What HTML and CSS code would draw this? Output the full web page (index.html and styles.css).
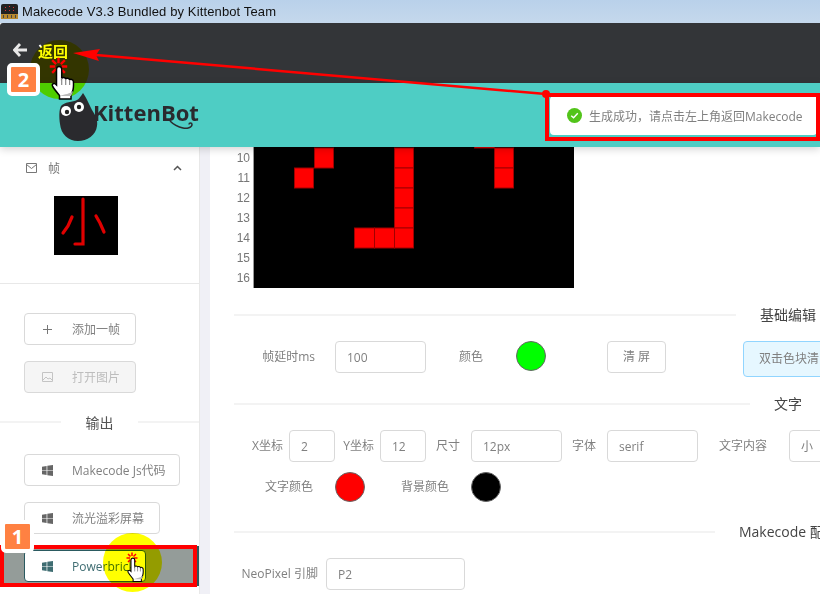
FILE: index.html
```html
<!DOCTYPE html>
<html lang="en">
<head>
    <meta charset="UTF-8">
    <title>Makecode V3.3</title>
    <link rel="stylesheet" href="styles.css">
</head>
<body>
<svg class="defs" width="0" height="0">
    <symbol id="win" viewBox="0 0 12 12">
        <path d="M0 1.8 5 1V5.6H0zM5.8 .9 12 0V5.6H5.8zM0 6.4H5V11L0 10.2zM5.8 6.4H12V12L5.8 11.1z"/>
    </symbol>
    <symbol id="hand" viewBox="0 0 25 36">
        <path d="M8 1.5c1.6 0 2.7 1.1 2.7 2.8v9c.8-1.2 3.4-1.2 4 .6.8-1.2 3.4-1 3.9.9.9-1 3.6-.6 3.8 1.700.2 3 .1 6-.3 8-.4 2-1.300 3.500-2.100 5v4.500H8.500v-3.500C6 27.500 3.500 24.500 1.700 21.500c-1.200-2.200.8-4 2.800-2.500l1 1V4.300C5.500 2.600 6.400 1.500 8 1.500z" fill="#fff" stroke="#000" stroke-width="1.500"/>
        <path d="M10.700 13v7M14.700 14v6M18.600 15v5" stroke="#888" stroke-width="1.200" fill="none"/>
        <path d="M9 31h11c.8-1.500 1.700-3 2-5-3 3-8 3-13 5z" fill="#bbb"/>
    </symbol>
    <symbol id="burst" viewBox="0 0 24 24">
        <path d="M12 1v7M12 16v7M1 12h7M16 12h7M4 4l5 5M20 4l-5 5M4 20l5-5M20 20l-5-5" stroke="#f00" stroke-width="3" fill="none"/>
    </symbol>
</svg>

<div class="app">
    <div class="titlebar">
        <svg class="mb-icon" width="17" height="15" viewBox="0 0 17 15">
            <rect width="17" height="15" rx="2" fill="#222"/>
            <rect y="10" width="17" height="5" fill="#b8892e"/>
            <path d="M4 3h1v1H4zM8 2h1v1H8zM12 3h1v1h-1zM4 6h1v1H4zM8 6h1v1H8zM12 6h1v1h-1z" fill="#d33"/>
            <path d="M2 11h1v3H2zM6 11h1v3H6zM10 11h1v3h-1zM14 11h1v3h-1z" fill="#444"/>
        </svg>
        <span>Makecode V3.3 Bundled by Kittenbot Team</span>
    </div>

    <div class="topbar">
        <svg class="back" width="14" height="14" viewBox="0 0 14 14">
            <path d="M7 1 1.500 7 7 13M2 7h12" fill="none" stroke="#e8e8e8" stroke-width="2.800"/>
        </svg>
        <b class="back-text">返回</b>
    </div>

    <div class="brandbar">
        <div class="logo">
            <svg class="cat" width="40" height="50" viewBox="0 0 40 50">
                <path d="M2 14C5 10 14 10 18 8 20 7 22 4 24 1 27 5 31 14 33 18 37 24 39 29 38 34 37 43 28 49 19 49 9 49 2 42 1 32 0 25 0 18 2 14z" fill="#2a2a2e"/>
                <circle cx="7" cy="19" r="5" fill="#fff"/>
                <circle cx="20" cy="15" r="5" fill="#fff"/>
                <circle cx="8" cy="20" r="2.200" fill="#222"/>
                <circle cx="20" cy="15" r="2.200" fill="#222"/>
            </svg>
            <span class="logo-text">KittenBot</span>
            <svg class="tail" width="26" height="12" viewBox="0 0 26 12">
                <path d="M1 1c4 4 8 6 13 7 4 .8 9-.5 9-3.500 0-2-3-2-3 0" fill="none" stroke="#2a2a2e" stroke-width="1.500"/>
            </svg>
        </div>
        <div class="toast">
            <svg width="15" height="15" viewBox="0 0 16 16">
                <circle cx="8" cy="8" r="8" fill="#52c41a"/>
                <path d="M4.500 8.200 7 10.500l4.500-5" fill="none" stroke="#fff" stroke-width="1.500"/>
            </svg>
            <span>生成成功，请点击左上角返回Makecode</span>
        </div>
    </div>

    <div class="work">
        <aside class="side">
            <div class="menu-head">
                <svg class="mail" width="11" height="10" viewBox="0 0 11 10">
                    <path d="M.5.5h10v9H.500zM.5 1.500 5.500 5.500l5-4" fill="none" stroke="#777"/>
                </svg>
                <span>帧</span>
                <svg class="chev" width="9" height="6" viewBox="0 0 9 6">
                    <path d="M1 5 4.500 1.500 8 5" fill="none" stroke="#555" stroke-width="1.500"/>
                </svg>
            </div>
            <svg class="thumb" width="64" height="59" viewBox="0 0 64 59">
                <rect width="64" height="59" fill="#000"/>
                <g class="thumb-strokes" fill="none" stroke="#e00000" stroke-width="3.200" stroke-linecap="round">
                    <path d="M29 3V48H21"/>
                    <path d="M18 21 14 30 9 37"/>
                    <path d="M42 20 46 27 50 36"/>
                </g>
            </svg>
            <div class="side-line"></div>
            <div class="item first"><div class="btn w112">
                <svg class="plus" width="11" height="11" viewBox="0 0 11 11"><path d="M5.500 1v9M1 5.500h9" stroke="#777" fill="none"/></svg>
                <span>添加一帧</span>
            </div></div>
            <div class="item"><div class="btn w112 off">
                <svg width="11" height="10" viewBox="0 0 11 10"><path d="M.5.500h10v9H.500zM1 8l3-3 2 2 2-1 2 2" fill="none" stroke="#c4c4c4"/></svg>
                <span>打开图片</span>
            </div></div>
            <div class="side-title"><i></i><span>输出</span><i></i></div>
            <div class="item"><div class="btn w156"><svg class="win"><use href="#win"/></svg><span>Makecode Js代码</span></div></div>
            <div class="item"><div class="btn w136"><svg class="win"><use href="#win"/></svg><span>流光溢彩屏幕</span></div></div>
            <div class="item on"><div class="btn w122"><svg class="win"><use href="#win"/></svg><span>Powerbrick</span></div></div>
        </aside>
        <div class="gutter"></div>

        <main class="content">
            <div class="matrix">
                <div class="rows">
                    <span class="row-first">10</span><span>11</span><span>12</span><span>13</span><span>14</span><span>15</span><span>16</span>
                </div>
                <svg class="leds" width="320" height="141" viewBox="0 0 320 141">
                    <rect width="320" height="141" fill="#000"/>
                    <g fill="#f00" stroke="#a00000" stroke-width="1">
                        <rect x="220.500" y="-19" width="20" height="20"/>
                        <rect x="60.500" y="1" width="19" height="20"/>
                        <rect x="140.500" y="1" width="19" height="20"/>
                        <rect x="240.500" y="1" width="19" height="20"/>
                        <rect x="40.500" y="21" width="19" height="20"/>
                        <rect x="140.500" y="21" width="19" height="20"/>
                        <rect x="240.500" y="21" width="19" height="20"/>
                        <rect x="140.500" y="41" width="19" height="20"/>
                        <rect x="140.500" y="61" width="19" height="20"/>
                        <rect x="100.500" y="81" width="20" height="20"/>
                        <rect x="120.500" y="81" width="20" height="20"/>
                        <rect x="140.500" y="81" width="19" height="20"/>
                    </g>
                </svg>
            </div>

            <div class="rule"><i class="w502"></i><span>基础编辑</span></div>
            <div class="row">
                <label class="l-delay">帧延时ms</label>
                <input class="w91" value="100">
                <label class="l-color">颜色</label>
                <span class="dot green"></span>
                <div class="plain">清 屏</div>
                <div class="alert">双击色块清</div>
            </div>

            <div class="rule rule-text"><i class="w516"></i><span>文字</span></div>
            <div class="row">
                <label class="l-x">X坐标</label>
                <input class="w46" value="2">
                <label class="l-y">Y坐标</label>
                <input class="w46" value="12">
                <label class="l-size">尺寸</label>
                <input class="w91" value="12px">
                <label class="l-size">字体</label>
                <input class="w91" value="serif">
                <label class="l-content">文字内容</label>
                <input class="w91" value="小">
            </div>
            <div class="row row-colors">
                <label class="l-textcolor">文字颜色</label>
                <span class="dot red"></span>
                <label class="l-bgcolor">背景颜色</label>
                <span class="dot black"></span>
            </div>

            <div class="rule rule-mk"><i class="w481"></i><span>Makecode 配</span></div>
            <div class="row">
                <label class="l-neo">NeoPixel 引脚</label>
                <input class="w139" value="P2">
            </div>
        </main>
    </div>

    <!-- 标注 -->
    <div class="mark-box box-toast"></div>
    <div class="mark-box box-item"></div>
    <svg class="arrow" width="820" height="594" viewBox="0 0 820 594">
        <path d="M96 55 546 94" stroke="#f00" stroke-width="2.500" fill="none"/>
        <path d="M73 53 100 49 96 55 99 61z" fill="#f00"/>
        <circle cx="546" cy="94" r="4" fill="#f00"/>
    </svg>
    <div class="spot spot-top"></div>
    <div class="spot spot-bottom"></div>
    <svg class="burst burst-top"><use href="#burst"/></svg>
    <svg class="hand hand-top"><use href="#hand"/></svg>
    <svg class="burst burst-bottom"><use href="#burst"/></svg>
    <svg class="hand hand-bottom"><use href="#hand"/></svg>
    <div class="badge badge-1">1</div>
    <div class="badge badge-2">2</div>
</div>
</body>
</html>
```

FILE: styles.css
```css
* {
    margin: 0;
    padding: 0;
    box-sizing: border-box;
}
body {
    background-color: #fff;
    overflow: hidden;
    font: 12px "Open Sans", "Noto Sans CJK SC", sans-serif;
    color: #808080;
}
i {
    display: block;
}
.defs {
    position: absolute;
}
.app {
    position: relative;
    width: 820px;
    height: 594px;
    overflow: hidden;
    background-color: #fff;
}

/* 顶部 */
.titlebar {
    display: flex;
    align-items: center;
    gap: 4px;
    height: 23px;
    padding-left: 1px;
    background: linear-gradient(#b9d1ea, #c5d8ec);
    font: 13px "Liberation Sans", sans-serif;
    letter-spacing: .13px;
    color: #111;
}
.topbar {
    display: flex;
    align-items: center;
    gap: 11px;
    height: 60px;
    padding: 0 0 6px 13px;
    background-color: #333538;
    border-top-left-radius: 3px;
}
.back-text {
    color: #fff;
    font: bold 15px "Noto Sans CJK SC", sans-serif;
}
.brandbar {
    position: relative;
    z-index: 2;
    display: flex;
    align-items: center;
    justify-content: space-between;
    height: 64px;
    padding: 0 3px 0 59px;
    background-color: #4ecdc4;
    box-shadow: 0 2px 8px rgba(0, 0, 0, .18);
}
.logo {
    position: relative;
    display: flex;
    align-items: center;
    height: 64px;
}
.cat {
    margin-top: 4px;
    margin-right: -6px;
}
.logo-text {
    margin-top: -6px;
    font: bold 22px "Open Sans", sans-serif;
    color: #2a2a2e;
}
.tail {
    position: absolute;
    left: 110px;
    top: 37px;
}
.toast {
    display: flex;
    align-items: center;
    gap: 7px;
    width: 267px;
    height: 39px;
    padding-left: 17px;
    margin-top: 1px;
    background-color: #fff;
    border-radius: 4px;
}

/* 主体 */
.work {
    display: flex;
    height: 447px;
}
.side {
    flex: none;
    width: 200px;
    border-right: 1px solid #e8e8e8;
}
.gutter {
    flex: none;
    width: 10px;
    background-color: #f0f0f6;
}
.menu-head {
    display: flex;
    align-items: center;
    gap: 11px;
    height: 41px;
    padding: 0 17px 0 26px;
    color: #777;
}
.chev {
    margin-left: auto;
}
.thumb {
    display: block;
    margin: 8px 0 0 54px;
}
.thumb-strokes {
    filter: blur(.5px);
}
.side-line {
    height: 1px;
    margin-top: 28px;
    background-color: #e8e8e8;
}
.item {
    height: 40px;
    padding: 4px 0 4px 24px;
    margin-bottom: 8px;
}
.item.first {
    margin-top: 25px;
}
.item.on {
    margin-bottom: 0;
    background-color: #949c99;
    border-right: 3px solid #2a5a60;
}
.btn {
    display: flex;
    align-items: center;
    gap: 19px;
    height: 32px;
    padding-left: 17px;
    background-color: #fff;
    border: 1px solid #d9d9d9;
    border-radius: 4px;
    white-space: nowrap;
}
.w112 { width: 112px; }
.w156 { width: 156px; }
.w136 { width: 136px; }
.w122 { width: 122px; }
.btn svg {
    flex: none;
}
.btn.off {
    background-color: #f5f5f5;
    color: #bdbdbd;
}
.item.on .btn {
    border-color: #2a5a60;
    color: #3f6d72;
}
.win {
    width: 11px;
    height: 11px;
    fill: #666;
}
.item.on .win {
    fill: #3f6d72;
}
.side-title {
    display: flex;
    align-items: center;
    height: 20px;
    margin: 15px 0 18px;
    color: #555;
    font-size: 14px;
}
.side-title i {
    flex: 1;
    height: 2px;
    background-color: #f3f3f3;
}
.side-title span {
    width: 77px;
    text-align: center;
}

.content {
    flex: 1;
    min-width: 0;
    padding-left: 24px;
    overflow: hidden;
}
.matrix {
    display: flex;
    height: 141px;
}
.rows {
    display: flex;
    flex-direction: column;
    width: 16px;
    margin-right: 4px;
    font: 12px/20px "Liberation Sans", sans-serif;
    color: #777;
    text-align: right;
}
.row-first {
    height: 21px;
    line-height: 22px;
}
.leds {
    flex: none;
    box-shadow: -1px 0 0 #999;
}
.rule {
    display: flex;
    align-items: center;
    height: 20px;
    margin: 17px 0 16px;
    white-space: nowrap;
    font-size: 14px;
    color: #444;
}
.rule span {
    margin-top: -3px;
}
.rule i {
    flex: none;
    height: 2px;
    margin-right: 24px;
    background-color: #f3f3f3;
}
.rule-mk {
    margin-top: 19px;
}
.w502 { width: 502px; }
.w516 { width: 516px; }
.w481 { width: 481px; }
.row {
    display: flex;
    align-items: flex-start;
    white-space: nowrap;
}
.row-colors {
    margin-top: 10px;
}
.row label {
    flex: none;
    line-height: 32px;
    text-align: right;
}
.row input {
    flex: none;
    height: 32px;
    padding: 0 11px;
    background-color: #fff;
    border: 1px solid #d9d9d9;
    border-radius: 4px;
    font: inherit;
    color: #808080;
}
.w46 { width: 46px; }
.w91 { width: 91px; }
.w139 { width: 139px; }
.l-delay { width: 81px; margin-right: 20px; }
.l-color { width: 24px; margin: 0 33px; }
.l-x { width: 49px; margin-right: 6px; }
.l-y { width: 33px; margin: 0 6px; }
.l-size { width: 24px; margin: 0 11px 0 10px; }
.l-content { width: 48px; margin: 0 22px 0 21px; }
.l-textcolor { width: 79px; margin: -1px 22px 0 0; }
.l-bgcolor { width: 48px; margin: -1px 22px 0 36px; }
.l-neo { width: 84px; margin-right: 8px; }
.dot {
    flex: none;
    width: 30px;
    height: 30px;
    border: 1px solid #666;
    border-radius: 50%;
}
.green { background-color: #0f0; }
.red { background-color: #f00; }
.black { background-color: #000; }
.plain {
    flex: none;
    width: 59px;
    height: 32px;
    margin-left: 61px;
    border: 1px solid #d9d9d9;
    border-radius: 4px;
    line-height: 30px;
    text-align: center;
}
.alert {
    flex: none;
    width: 160px;
    height: 36px;
    margin-left: 77px;
    padding-left: 15px;
    background-color: #e6f7ff;
    border: 1px solid #91d5ff;
    border-radius: 4px;
    line-height: 34px;
}

/* 标注 */
.mark-box, .arrow, .spot, .burst, .hand, .badge {
    position: absolute;
    z-index: 3;
}
.mark-box {
    border: 4px solid #f00;
}
.box-toast {
    left: 545px;
    top: 93px;
    width: 275px;
    height: 48px;
}
.box-item {
    left: 0;
    top: 545px;
    width: 197px;
    height: 42px;
}
.arrow {
    left: 0;
    top: 0;
}
.spot {
    width: 59px;
    height: 59px;
    border-radius: 50%;
    background-color: #ff0;
    mix-blend-mode: multiply;
}
.spot-top {
    left: 30px;
    top: 40px;
}
.spot-bottom {
    left: 103px;
    top: 533px;
}
.burst-top {
    left: 49px;
    top: 57px;
    width: 19px;
    height: 19px;
}
.hand-top {
    left: 51px;
    top: 65px;
    width: 25px;
    height: 36px;
}
.burst-bottom {
    left: 126px;
    top: 552px;
    width: 12px;
    height: 12px;
}
.hand-bottom {
    left: 127px;
    top: 557px;
    width: 18px;
    height: 26px;
}
.badge {
    width: 33px;
    height: 33px;
    background-color: #ff8142;
    border: 4px solid #fff;
    border-radius: 5px;
    font: bold 20px/25px "Open Sans", sans-serif;
    color: #fff;
    text-align: center;
}
.badge-1 {
    left: 1px;
    top: 520px;
}
.badge-2 {
    left: 7px;
    top: 63px;
}
```
